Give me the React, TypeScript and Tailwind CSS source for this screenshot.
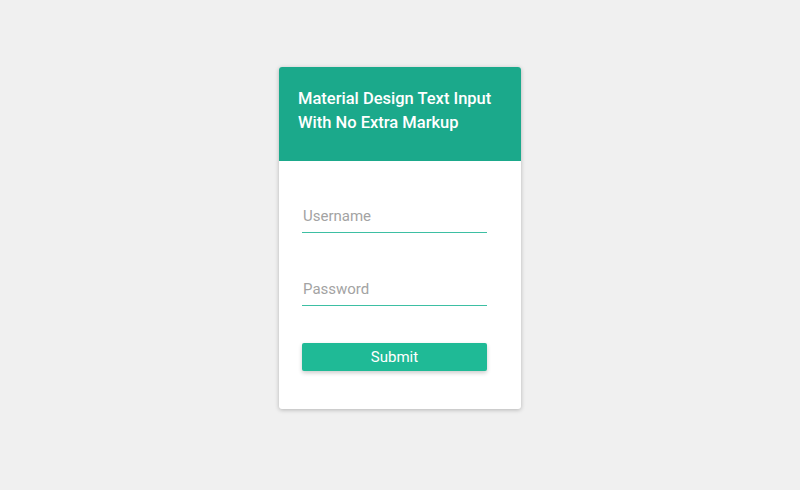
const App = () => {
  return (
    <div className="min-h-screen bg-[#f0f0f0] pt-[67px] font-['Roboto',sans-serif]">
      <div className="mx-auto w-[242px] bg-white rounded-[3px] shadow-[0_1px_4px_rgba(0,0,0,0.25)] overflow-hidden">
        <div className="bg-[#1ba98b] h-[94px] pl-[19px] pt-[20px]">
          <h1 className="text-white text-[16.5px] leading-[24px] font-medium">
            Material Design Text Input
            <br />
            With No Extra Markup
          </h1>
        </div>
        <form className="pl-[23px] pt-[41px] pb-[38px] flex flex-col">
          <input
            type="text"
            placeholder="Username"
            className="w-[185px] h-[31px] pl-[1px] pb-[2px] text-[15px] text-gray-700 placeholder:text-[#a3a3a3] border-b border-[#3dbfa3] outline-none"
          />
          <input
            type="password"
            placeholder="Password"
            className="mt-[42px] w-[185px] h-[31px] pl-[1px] pb-[2px] text-[15px] text-gray-700 placeholder:text-[#a3a3a3] border-b border-[#3dbfa3] outline-none"
          />
          <button
            type="button"
            className="mt-[37px] w-[185px] h-[28px] bg-[#1fba96] text-white text-[15px] rounded-[2px] shadow-[0_2px_4px_rgba(0,0,0,0.2)]"
          >
            Submit
          </button>
        </form>
      </div>
    </div>
  );
};

export default App;
